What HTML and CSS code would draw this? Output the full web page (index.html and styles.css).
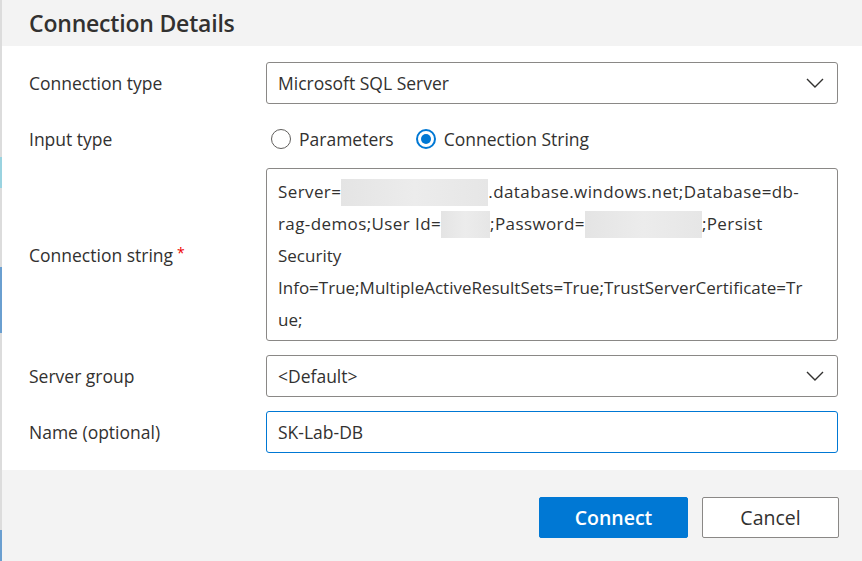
FILE: index.html
```html
<!DOCTYPE html>
<html>
<head>
<meta charset="utf-8">
<link rel="stylesheet" href="styles.css">
</head>
<body>
<div class="page">
  <div class="edge">
    <div class="edge-seg edge-a"></div>
    <div class="edge-seg edge-b"></div>
    <div class="edge-seg edge-c"></div>
  </div>
  <div class="dialog">
    <div class="header"><h1 class="title">Connection Details</h1></div>
    <div class="form">
      <div class="row">
        <label class="label">Connection type</label>
        <div class="select">
          <span class="value">Microsoft SQL Server</span>
          <svg class="chev" width="18" height="10" viewBox="0 0 18 10"><polyline points="1,1 9,9 17,1" fill="none" stroke="#323130" stroke-width="1.4"/></svg>
        </div>
      </div>
      <div class="row row-radio">
        <label class="label">Input type</label>
        <div class="radios">
          <span class="radio"><span class="dot"></span>Parameters</span>
          <span class="radio checked"><span class="dot"></span>Connection String</span>
        </div>
      </div>
      <div class="row">
        <label class="label">Connection string<span class="req">*</span></label>
        <div class="textarea">
          <div class="line wide">Server=<span class="blur b1"></span>.database.windows.net;Database=db-</div>
          <div class="line wide">rag-demos;User Id=<span class="blur b2"></span>;Password=<span class="blur b3"></span>;Persist</div>
          <div class="line">Security</div>
          <div class="line">Info=True;MultipleActiveResultSets=True;TrustServerCertificate=Tr</div>
          <div class="line">ue;</div>
        </div>
      </div>
      <div class="row">
        <label class="label">Server group</label>
        <div class="select">
          <span class="value">&lt;Default&gt;</span>
          <svg class="chev" width="18" height="10" viewBox="0 0 18 10"><polyline points="1,1 9,9 17,1" fill="none" stroke="#323130" stroke-width="1.4"/></svg>
        </div>
      </div>
      <div class="row">
        <label class="label">Name (optional)</label>
        <div class="input focused"><span class="value">SK-Lab-DB</span></div>
      </div>
    </div>
    <div class="footer">
      <button class="btn primary">Connect</button>
      <button class="btn secondary">Cancel</button>
    </div>
  </div>
</div>
</body>
</html>
```
FILE: styles.css
```css
* { box-sizing: border-box; }
html, body { margin: 0; padding: 0; }
body {
  font-family: "Open Sans", "Noto Sans", sans-serif;
  color: #323130;
  width: 862px;
  height: 561px;
  overflow: hidden;
}
.page { display: flex; height: 561px; }
.edge {
  width: 2px;
  background: #dcdcdc;
  display: flex;
  flex-direction: column;
}
.edge-seg { width: 2px; }
.edge-a { margin-top: 157px; height: 31px; background: #9ad3e0; }
.edge-b { margin-top: 79px; height: 66px; background: #6a9fd0; }
.edge-c { margin-top: 197px; height: 31px; background: #6a9fd0; }
.dialog { flex: 1; display: flex; flex-direction: column; background: #fff; }
.header {
  height: 46px;
  background: #f3f3f3;
  padding-left: 27px;
  display: flex;
  align-items: center;
}
.title {
  margin: 0;
  font-size: 23px;
  font-weight: 600;
  color: #323130;
  letter-spacing: -0.2px;
}
.form {
  padding: 16px 24px 17px 27px;
  display: flex;
  flex-direction: column;
  gap: 14px;
}
.row {
  display: grid;
  grid-template-columns: 237px 1fr;
  align-items: center;
}
.label { font-size: 17.5px; color: #323130; }
.req { color: #e00; font-size: 14px; margin-left: 4px; position: relative; top: -4px; }
.select, .input {
  height: 42px;
  border: 1px solid #8a8886;
  border-radius: 3px;
  display: flex;
  align-items: center;
  justify-content: space-between;
  padding: 0 12px 0 11px;
  font-size: 17.5px;
}
.input.focused { border-color: #0078d4; }
.chev { margin-right: 1px; }
.row-radio { height: 36px; padding-top: 6px; }
.radios { display: flex; align-items: center; gap: 22px; padding-left: 5px; font-size: 17.5px; }
.radio { display: flex; align-items: center; gap: 8px; }
.dot {
  width: 20px; height: 20px;
  border: 1px solid #605e5c;
  border-radius: 50%;
  display: inline-flex;
  align-items: center;
  justify-content: center;
}
.radio.checked .dot { border: 2px solid #0078d4; }
.radio.checked .dot::after {
  content: "";
  width: 10px; height: 10px;
  border-radius: 50%;
  background: #0078d4;
}
.textarea {
  border: 1px solid #8a8886;
  border-radius: 3px;
  padding: 7px 11px 5px 11px;
  font-size: 17px;
  line-height: 32px;
  height: 173px;
}
.line { white-space: nowrap; height: 32px; }
.line.wide { letter-spacing: 0.4px; }
.blur {
  display: inline-block;
  height: 27px;
  vertical-align: -8px;
  background: linear-gradient(90deg, #e4e4e4, #ececec 50%, #e6e6e6);
}
.b1 { width: 147px; }
.b2 { width: 49px; }
.b3 { width: 117px; }
.footer {
  flex: 1;
  background: #f3f3f3;
  display: flex;
  justify-content: flex-end;
  align-items: flex-start;
  padding: 27px 23px 0 0;
  gap: 14px;
}
.btn {
  height: 41px;
  border-radius: 2px;
  font-family: "Open Sans", "Noto Sans", sans-serif;
  font-size: 19.5px;
  font-weight: 600;
  cursor: pointer;
}
.primary { width: 149px; background: #0078d4; color: #fff; border: 1px solid #0078d4; }
.secondary { width: 137px; background: #fff; color: #323130; border: 1px solid #8a8886; font-weight: 500; }
```
